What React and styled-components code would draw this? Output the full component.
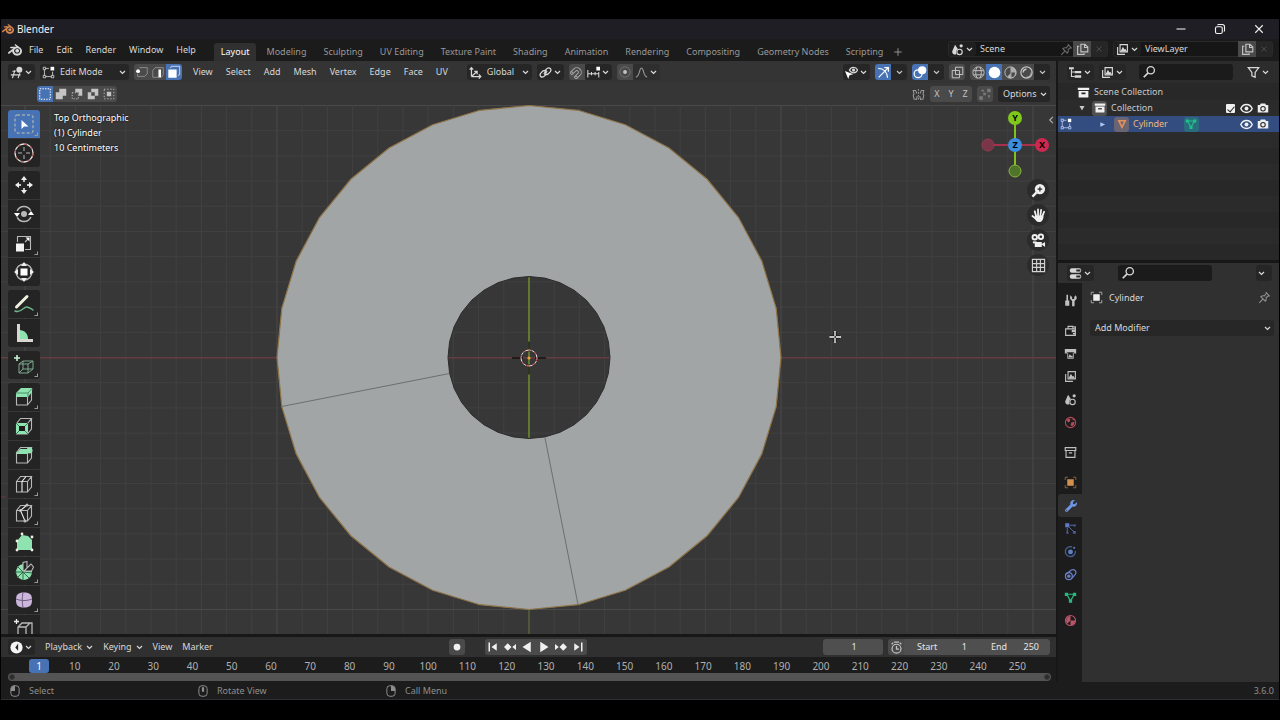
import React, { useState } from 'react';
import styled, { createGlobalStyle } from 'styled-components';
import { SiBlender } from 'react-icons/si';
import { FaWrench } from 'react-icons/fa';

const GlobalStyle = createGlobalStyle`
  * {
    box-sizing: border-box;
  }

  body {
    background: #000;
    color: #d8d8d8;
    font-family: 'Noto Sans', 'Open Sans', sans-serif;
    font-size: 9px;
    line-height: 14px;
    margin: 0;
  }

  button,
  input,
  select {
    background: none;
    border: 0;
    color: inherit;
    font: inherit;
    margin: 0;
    outline: none;
    padding: 0;
  }

  select {
    appearance: none;
  }
`;

const Screen = styled.div`
  display: flex;
  flex-direction: column;
  height: 100vh;
  min-height: 480px;
  padding: 19px 1px 20px;
`;

const TitleBar = styled.header`
  align-items: center;
  background: #201e25;
  color: #f2f2f2;
  display: flex;
  flex: none;
  gap: 3px;
  height: 20px;
  padding: 0 14px 0 1px;
`;

const AppTitle = styled.h1`
  flex: 1;
  font-size: 10px;
  font-weight: 400;
  margin: 0;
`;

const WindowButtons = styled.div`
  display: flex;
  gap: 27px;
`;

const MenuBar = styled.nav`
  align-items: flex-end;
  background: #1b1b1b;
  display: flex;
  flex: none;
  height: 22px;
  padding: 0 6px 0 7px;
`;

const Menus = styled.div`
  align-items: center;
  display: flex;
  gap: ${props => props.$gap || '13px'};
  height: 22px;
  padding: ${props => props.$padding || '0'};
`;

const PlainButton = styled.button`
  align-items: center;
  color: ${props => props.color || 'inherit'};
  display: flex;
  gap: 4px;
  justify-content: center;
  white-space: nowrap;
`;

const Tabs = styled.div`
  display: flex;
  flex: 1;
  gap: 3px;
  margin-left: 18px;
`;

const Tab = styled.button`
  background: ${props => (props.$active ? '#303030' : 'none')};
  border-radius: 3px 3px 0 0;
  color: ${props => (props.$active ? '#fff' : '#989898')};
  height: 18px;
  padding: 0 7px;
  white-space: nowrap;
`;

const IdBlock = styled.div`
  align-items: center;
  background: #161616;
  border: 1px solid #2a2a2a;
  border-radius: 3px;
  display: flex;
  height: 16px;
  margin: 0 0 4px 5px;
  width: 160px;
`;

const IdInput = styled.input`
  flex: 1;
  min-width: 0;
  padding-left: 4px;
`;

const Main = styled.main`
  background: #171717;
  display: flex;
  flex: 1;
  gap: 2px;
  min-height: 0;
`;

const LeftColumn = styled.div`
  display: flex;
  flex: 1;
  flex-direction: column;
  gap: 3px;
  min-width: 0;
`;

const RightColumn = styled.aside`
  display: flex;
  flex: none;
  flex-direction: column;
  gap: 3px;
  width: 221px;
`;

const Viewport = styled.section`
  background: #373737;
  display: flex;
  flex: 1;
  flex-direction: column;
  min-height: 0;
  overflow: hidden;
  position: relative;
`;

const Scene = styled.svg`
  height: 100%;
  left: 0;
  position: absolute;
  top: 0;
  width: 100%;
`;

const Header = styled.div`
  align-items: center;
  background: ${props => props.$bg || '#303030'};
  display: flex;
  flex: none;
  gap: 5px;
  height: ${props => props.$height || '22px'};
  padding: ${props => props.$padding || '0 7px'};
  position: relative;
`;

const Spacer = styled.div`
  flex: ${props => props.$grow || 1};
`;

const Group = styled.div`
  border-radius: 3px;
  display: flex;
  flex: none;
  margin-left: ${props => props.$left || '0'};
  overflow: hidden;
`;

const Toggle = styled.button`
  align-items: center;
  background: ${props =>
    props.$active ? '#4772b3' : props.$dark ? '#262626' : '#4a4a4a'};
  color: ${props => (props.$active ? '#fff' : '#c4c4c4')};
  display: flex;
  height: 16px;
  justify-content: center;
  width: ${props => props.$width || '16px'};
`;

const DropBox = styled.label`
  align-items: center;
  background: ${props => props.$bg || '#262626'};
  border-radius: 3px;
  display: flex;
  flex: none;
  gap: 2px;
  height: ${props => props.$height || '16px'};
  justify-content: space-between;
  padding: 0 3px 0 2px;
  width: ${props => props.$width || 'auto'};
`;

const Select = styled.select`
  flex: 1;
  min-width: 0;
  padding-left: 3px;
`;

const ViewBody = styled.div`
  display: flex;
  flex: 1;
  min-height: 0;
  padding: 5px 7px 0;
  position: relative;
`;

const Toolbar = styled.div`
  display: flex;
  flex: none;
  flex-direction: column;
  gap: 4px;
  width: 32px;
`;

const ToolGroup = styled.div`
  border-radius: 3px;
  display: flex;
  flex: none;
  flex-direction: column;
  gap: 1px;
  overflow: hidden;
`;

const Tool = styled.button`
  align-items: center;
  background: ${props => (props.$active ? '#4772b3' : '#242424')};
  display: flex;
  height: 28px;
  justify-content: center;
  position: relative;
  width: 32px;

  &::after {
    border: 1px solid #9a9a9a;
    border-left-color: transparent;
    border-top-color: transparent;
    bottom: 2px;
    content: '';
    display: ${props => (props.$more ? 'block' : 'none')};
    height: 2px;
    position: absolute;
    right: 2px;
    width: 2px;
  }
`;

const ViewInfo = styled.div`
  color: #fff;
  line-height: 15px;
  padding: 0 0 0 14px;
  text-shadow: 0 0 2px #000;
`;

const NavColumn = styled.div`
  align-items: flex-end;
  display: flex;
  flex-direction: column;
  gap: 3px;
`;

const AxisGizmo = styled.svg`
  margin-bottom: -2px;
`;

const NavButton = styled.button`
  align-items: center;
  background: #2b2b2b;
  border-radius: 50%;
  color: #f0f0f0;
  display: flex;
  height: 22px;
  justify-content: center;
  width: 22px;
`;

const PanelTab = styled.button`
  color: #b0b0b0;
  display: flex;
  position: absolute;
  right: 0;
  top: 10px;
`;

const Timeline = styled.section`
  background: #1c1c1c;
  flex: none;
`;

const NumberField = styled.label`
  align-items: center;
  background: #4f4f4f;
  border-radius: ${props => props.$radius || '3px'};
  color: #e6e6e6;
  display: flex;
  height: 16px;
  justify-content: space-between;
  padding: 0 11px 0 13px;
  width: ${props => props.$width};
`;

const NumberInput = styled.input`
  min-width: 0;
  text-align: ${props => props.$align || 'right'};
  width: ${props => props.$width || '24px'};
`;

const Ruler = styled.div`
  color: #b0b0b0;
  display: flex;
  font-size: 10px;
  height: 16px;
  line-height: 18px;
  padding: 0 19px 0 54px;
  position: relative;
  text-align: center;
`;

const Frame = styled.span`
  flex: 1;
`;

const Playhead = styled.span`
  background: #4772b3;
  border-radius: 3px;
  color: #fff;
  height: 14px;
  left: 28px;
  line-height: 14px;
  position: absolute;
  top: 2px;
  width: 20px;
`;

const ScrollBar = styled.div`
  align-items: center;
  background: #545454;
  border-radius: 4px;
  display: flex;
  height: 8px;
  justify-content: space-between;
  margin: 0 5px 1px 7px;
  padding: 0 1px;
`;

const Handle = styled.span`
  background: #2c2c2c;
  border: 1px solid #3c3c3c;
  border-radius: 50%;
  height: 6px;
  width: 6px;
`;

const Outliner = styled.section`
  background: #282828;
  display: flex;
  flex-direction: column;
  height: 199px;
`;

const SearchBox = styled.label`
  align-items: center;
  background: #1b1b1b;
  border-radius: 3px;
  display: flex;
  height: 16px;
  padding: 0 3px;
  width: 94px;
`;

const SearchInput = styled.input`
  flex: 1;
  min-width: 0;
`;

const Tree = styled.div`
  background: repeating-linear-gradient(#282828 0 16px, #2b2b2b 16px 32px);
  flex: 1;
  margin-top: 1px;
`;

const TreeRow = styled.div`
  align-items: center;
  background: ${props => (props.$selected ? '#334d80' : 'none')};
  color: ${props => (props.$selected ? '#f0b878' : '#c8c8c8')};
  display: flex;
  gap: 4px;
  height: 16px;
  padding: 0 10px 0 ${props => props.$indent};
`;

const IconTile = styled.span`
  align-items: center;
  background: ${props => props.$bg || 'none'};
  border-radius: 3px;
  display: flex;
  height: 15px;
  justify-content: center;
  margin-left: ${props => props.$left || '0'};
  width: 15px;
`;

const TreeCheck = styled.input`
  appearance: none;
  background: #f0f0f0;
  border-radius: 1px;
  height: 9px;
  margin-right: 1px;
  position: relative;
  width: 9px;

  &:checked::after {
    border: solid #222;
    border-width: 0 1px 1px 0;
    content: '';
    height: 6px;
    left: 3px;
    position: absolute;
    top: 1px;
    transform: rotate(40deg);
    width: 3px;
  }
`;

const Properties = styled.section`
  background: #303030;
  display: flex;
  flex: 1;
  flex-direction: column;
  min-height: 0;
`;

const PropBody = styled.div`
  display: flex;
  flex: 1;
  min-height: 0;
`;

const PropTabs = styled.div`
  background: #1c1c1c;
  display: flex;
  flex: none;
  flex-direction: column;
  gap: 7px;
  overflow: hidden;
  padding-top: 6px;
  width: 24px;
`;

const PropTabGroup = styled.div`
  display: flex;
  flex: none;
  flex-direction: column;
`;

const PropTab = styled.button`
  align-items: center;
  background: ${props => (props.$active ? '#303030' : 'none')};
  border-radius: 3px 0 0 3px;
  color: ${props => props.color || '#c0c0c0'};
  display: flex;
  height: 23px;
  justify-content: center;
  padding-left: 1px;
  width: 24px;
`;

const PropContent = styled.div`
  display: flex;
  flex: 1;
  flex-direction: column;
  gap: 15px;
  padding: 7px 5px 0 8px;
`;

const PropTitle = styled.div`
  align-items: center;
  display: flex;
  gap: 6px;
  height: 15px;
  padding-right: 3px;
`;

const StatusBar = styled.footer`
  align-items: center;
  background: #1c1c1c;
  border-bottom: 1px solid #2e2e34;
  color: #8e8e8e;
  display: flex;
  flex: none;
  height: 18px;
  padding: 0 5px 0 8px;
`;

const Hint = styled.span`
  align-items: center;
  display: flex;
  gap: 8px;
  width: 188px;
`;

const line = { fill: 'none', stroke: 'currentColor' };

const icons = {
  less: <path d="M11 3L6 8l5 5" {...line} strokeWidth="1.8" />,
  plus: <path d="M8 2v12M2 8h12" {...line} strokeWidth="1.5" />,
  close: <path d="M3 3l10 10M13 3L3 13" {...line} strokeWidth="1.5" />,
  minimize: <path d="M2 8h12" {...line} strokeWidth="1.4" />,
  restore: (
    <g {...line} strokeWidth="1.5">
      <rect x="2" y="5" width="9" height="9" rx="2" />
      <path d="M5 3c0-1 1-1 1-1h5c2 0 3 1 3 3v5c0 1-1 1-1 1" />
    </g>
  ),
  search: (
    <g {...line} strokeWidth="1.5">
      <circle cx="10" cy="6" r="4.2" />
      <path d="M7 9l-5 5" strokeWidth="2" />
    </g>
  ),
  pin: (
    <path
      d="M9.5 1.5l5 5M10.5 2.5L8 6C6 5.500 4.500 6 3.500 7l5.500 5.500c1-1 1.500-2.500 1-4.500l3.500-2.500M6 10l-4.500 4.500"
      {...line}
      strokeWidth="1.3"
    />
  ),
  copy: (
    <g {...line} strokeWidth="1.4">
      <path d="M6 1.500h5l3.500 3.500v6H6zM10.500 1.500v4h4" />
      <path d="M4 4H2v10h8v-1.500" />
    </g>
  ),
  scene: (
    <g>
      <path d="M5 2L1.5 10c-.5 4 4 5 5 3.500C5.500 11 7 8 8.500 7.500z" fill="currentColor" />
      <circle cx="10.500" cy="11" r="3.300" {...line} strokeWidth="1.4" />
      <circle cx="12.5" cy="3.5" r="2" fill="currentColor" />
    </g>
  ),
  layers: (
    <g>
      <path d="M5 2h9v9H5z" {...line} strokeWidth="1.4" />
      <path d="M2 5v9h9" {...line} strokeWidth="1.4" />
      <path d="M5.5 10.5l3-6 2 3.500 1-1 2 3.500z" fill="currentColor" />
    </g>
  ),
  viewEditor: (
    <g>
      <circle cx="11.5" cy="4.5" r="3.7" fill="currentColor" />
      <path d="M3 6.500h4M1 11h12M6 5l-3 10M12 9l-2 6" {...line} strokeWidth="1.4" />
    </g>
  ),
  editMode: (
    <g>
      <path d="M4.500 3h4M3 4.500v7M4.500 13h7M13 11.500V7" {...line} />
      <path d="M1.500 1.500h3v3h-3zM1.500 11.500h3v3h-3zM11.500 11.500h3v3h-3z" {...line} />
      <path d="M10.500 1h4.500v4.500h-4.500z" fill="#fff" />
    </g>
  ),
  vertexSel: (
    <g>
      <path d="M5 3h9v7l-3 3H3v-3" {...line} opacity=".6" />
      <circle cx="3.500" cy="7" r="2.200" fill="#fff" />
    </g>
  ),
  edgeSel: (
    <g>
      <path d="M2 6l3-3h9v8l-2 3H2z" {...line} opacity=".6" />
      <path d="M8.500 5h3v9h-3z" fill="#fff" />
    </g>
  ),
  faceSel: (
    <g>
      <path d="M4 3.500l1-2h9.500V11l-2 1" {...line} opacity=".8" />
      <path d="M1.500 5h9.500v9.500H1.500z" fill="#fff" />
    </g>
  ),
  axes: (
    <g {...line} strokeWidth="1.5">
      <path d="M3 13V2M.8 4.500L3 2l2.200 2.500M3 13h11M12 10.500l2.500 2.500-2.500 2.500M3 13l6.500-6M6.500 6.500h3.500V10" />
    </g>
  ),
  pivot: (
    <g {...line} strokeWidth="1.5">
      <path d="M7 6l3-3c3-2 6 1 4 4l-3 3c-2 1-4 1-5-1" />
      <path d="M9 10l-3 3c-3 2-6-1-4-4l3-3c2-1 4-1 5 1" />
      <circle cx="8" cy="8" r="1" fill="currentColor" />
    </g>
  ),
  magnet: (
    <g transform="rotate(45 8 8)" opacity=".75">
      <path
        d="M2.500 14V7.500a5.500 5.500 0 0 1 11 0V14h-3.500V7.500a2 2 0 0 0-4 0V14zM2.500 11.500H6M10 11.500h3.500"
        {...line}
        strokeWidth="1.200"
      />
    </g>
  ),
  increment: (
    <g>
      <path d="M1 5v9M5.500 7.500v4M10 7.500v4M14.500 7.500V14M1 9.500h13" {...line} strokeWidth="1.3" />
      <path d="M11.500 1H16v4.500h-4.500z" fill="#fff" />
    </g>
  ),
  proportional: (
    <g>
      <circle cx="8" cy="8" r="6" {...line} opacity=".35" />
      <circle cx="8" cy="8" r="2.200" fill="currentColor" />
    </g>
  ),
  falloff: <path d="M1 13.500c5 0 4-11 7-11s2 11 7 11" {...line} strokeWidth="1.400" opacity=".6" />,
  visibility: (
    <g>
      <path d="M5.500 5c2-4.500 8-4.500 10 0-2 4.500-8 4.500-10 0z" {...line} strokeWidth="1.500" />
      <circle cx="10.500" cy="5" r="2" fill="currentColor" />
      <path d="M0 6l10 4-4.500 1.500L4 16z" fill="#fff" />
    </g>
  ),
  gizmo: (
    <g {...line} strokeWidth="1.500">
      <path d="M1.500 3c7 0 11 5 11.500 11.500M2 14L14 2M9 2h5v5" />
    </g>
  ),
  overlay: (
    <g>
      <circle cx="5.800" cy="10" r="4.500" {...line} strokeWidth="1.400" />
      <circle cx="10.500" cy="6" r="4.700" fill="currentColor" />
    </g>
  ),
  xray: (
    <g {...line} strokeWidth="1.200">
      <path d="M5.500 1.500h9v9h-9zM1.500 5.500h9v9h-9z" />
    </g>
  ),
  wire: (
    <g {...line}>
      <circle cx="8" cy="8" r="6" />
      <path d="M2.500 6h11M2.500 10.500h11M6.500 2c-2 4-2 8 0 12M9.500 2c2 4 2 8 0 12" />
    </g>
  ),
  solid: <circle cx="8" cy="8" r="6.200" fill="currentColor" />,
  material: (
    <g>
      <circle cx="8" cy="8" r="6" {...line} />
      <path d="M8 2a6 6 0 0 1 0 12 6 6 0 0 1-3-1c0-2 2-3 3-4z" fill="currentColor" opacity=".8" />
      <path d="M9 8h4l-1 4-3 1z" fill="#4a4a4a" />
    </g>
  ),
  rendered: (
    <g {...line}>
      <circle cx="8" cy="8" r="6" strokeWidth="1.300" />
      <path d="M4.500 8A3.500 3.500 0 0 1 8 4.500" strokeWidth="1.500" />
      <path d="M13 8a5 5 0 0 1-5 5" strokeWidth="1.500" opacity=".6" />
    </g>
  ),
  butterfly: (
    <g {...line} strokeWidth="1.300">
      <path d="M6 7L4.500 3H1.500l1 4.500L1.500 9l1 4.500 3 .5L6.500 10M10 7l1.500-4h3l-1 4.500 1 1.500-1 4.500-3 .5L9.500 10" />
      <path d="M8 1.500v13" strokeDasharray="2 1.500" />
    </g>
  ),
  snapUv: (
    <g fill="currentColor" opacity=".4">
      <path d="M10.500 2h4v4h-4zM6 6.500h3v3H6zM1.500 10.500h4v4h-4zM4 3h3v2H4zM11.500 9h2v3h-2z" />
    </g>
  ),
  selNew: <path d="M2 2h12v12H2z" {...line} strokeWidth="1.200" strokeDasharray="1.600 1.400" />,
  selAdd: <path d="M6 2h8v8h-4v4H2V6h4z" fill="currentColor" />,
  selSub: (
    <g>
      <path d="M6 2h8v8h-4V6H6z" fill="currentColor" />
      <path d="M2.500 6.500h7v7h-7z" {...line} strokeDasharray="1.500 1.500" />
    </g>
  ),
  selXor: <path d="M6 2h8v8h-4v4H2V6h4zM6 6v4h4V6z" fill="currentColor" fillRule="evenodd" />,
  selAnd: (
    <g>
      <path d="M2.500 2.500h11v11h-11z" {...line} strokeDasharray="1.500 2" />
      <path d="M5.500 5.500h5v5h-5z" fill="currentColor" />
    </g>
  ),
  tree: (
    <g>
      <path d="M0 1.500h6V4H0zM7 6h8v3H7zM7 11.500h8v3H7z" fill="currentColor" />
      <path d="M3 4v9h4M3 7.500h4" {...line} strokeWidth="1.300" />
    </g>
  ),
  filter: <path d="M1.500 2h13L10 8v6l-4-2V8z" {...line} strokeWidth="1.500" />,
  box: <path d="M1 2h14v3H1zM2 6h12v8H2zM5.500 8v2h5V8z" fill="currentColor" fillRule="evenodd" />,
  boxLine: (
    <g {...line} strokeWidth="1.400">
      <path d="M1.500 2h13v3.500h-13zM2.500 5.500V14h11V5.500M6 8.500h4" />
    </g>
  ),
  down: <path d="M3 4h10l-5 9z" fill="currentColor" />,
  right: <path d="M3 3v10l11-5z" fill="currentColor" />,
  mesh: <path d="M2 2.500h12L8 14.500zM5.500 4.500L8 10l2.500-5.500z" fill="currentColor" fillRule="evenodd" />,
  meshData: (
    <g>
      <path d="M3.500 4h9L8 12.500z" {...line} strokeWidth="1.500" />
      <path d="M1 2h4v4H1zM11 2h4v4h-4zM6 10.500h4v4H6z" fill="currentColor" />
    </g>
  ),
  eye: (
    <g>
      <path d="M1 8c3-6.500 11-6.500 14 0-3 6.500-11 6.500-14 0z" {...line} strokeWidth="1.800" />
      <circle cx="8" cy="8" r="2.400" fill="currentColor" />
    </g>
  ),
  camera: (
    <g>
      <path d="M1 4h3l1-2h6l1 2h3v10H1z" fill="currentColor" />
      <circle cx="8" cy="9" r="3" fill="none" stroke="#282828" strokeWidth="1.400" />
    </g>
  ),
  propsEditor: (
    <g>
      <rect x="1" y="1.500" width="14" height="5.500" rx="2.500" fill="currentColor" />
      <rect x="1" y="9" width="14" height="5.500" rx="2.500" fill="currentColor" />
      <path d="M9 3h5v2.500H9zM9 10.500h5V13H9z" fill="#282828" />
    </g>
  ),
  object: (
    <g>
      <path d="M1.500 5V1.500H5M11 1.500h3.500V5M14.500 11v3.500H11M5 14.500H1.500V11" {...line} opacity=".7" />
      <path d="M4 4h8v8H4z" fill="currentColor" />
    </g>
  ),
  tools: (
    <path
      d="M3 1h2v7h1.500v6.500h-5V8H3zM8 1.500L10 4v2h2.500V4L14 1.500l1.500 2V6l-2.500 2.500v6.500h-3V8.500L7.500 6V3.500z"
      fill="currentColor"
    />
  ),
  render: (
    <g>
      <path d="M2 6h12v8H2zM5 6V3h6v3M12 3.500h2V6" {...line} strokeWidth="1.400" />
      <path d="M9.500 7h4v3h-4zM11 11h3v2h-3z" fill="currentColor" />
    </g>
  ),
  output: (
    <g>
      <path d="M1 2.500h14V8h-2.500V6.500h-9V8H1z" fill="currentColor" />
      <path d="M4.500 7v7h7V7" {...line} />
      <path d="M5 13l2-4 2 2 1-1 1 3z" fill="currentColor" />
    </g>
  ),
  world: (
    <g>
      <circle cx="8" cy="8" r="6.300" {...line} strokeWidth="1.300" />
      <path d="M3 5l3-2 2 1-1 3-2 1zM9 8l4-1-1 4-2 1.500L8 11zM10 2.500l3 2-2 1z" fill="currentColor" />
    </g>
  ),
  particles: (
    <g>
      <path d="M1.500 1.500h5v5h-5z" fill="currentColor" />
      <path d="M7 4h6M4 7v6M6 6l6 6" {...line} />
      <path d="M12 3h2.500v2.500H12zM11 11h3.500v3.500H11zM3 12h2.500v2.500H3z" fill="currentColor" opacity=".7" />
    </g>
  ),
  physics: (
    <g>
      <path d="M10 2.300a6.200 6.200 0 1 0 4 5" {...line} strokeWidth="1.500" opacity=".7" />
      <circle cx="8" cy="8.500" r="3" fill="currentColor" />
      <circle cx="12.500" cy="3.500" r="1.300" fill="currentColor" />
    </g>
  ),
  constraint: (
    <g {...line} strokeWidth="1.500">
      <circle cx="6" cy="10" r="4.200" />
      <path d="M2 8l7-5.500c4-2 7 2 5 5l-4 5" />
      <circle cx="6" cy="10" r="1.400" fill="currentColor" />
    </g>
  ),
  matSphere: (
    <g>
      <circle cx="8" cy="8" r="6.200" {...line} strokeWidth="1.400" />
      <path d="M8 2a6 6 0 0 0-4 10l4-4zM8 8h6a6 6 0 0 1-6 6z" fill="currentColor" />
    </g>
  ),
  clock: (
    <g>
      <circle cx="8" cy="8" r="7.500" fill="#f4f4f4" />
      <path d="M10 3L6.500 8 10 12z" fill="#262626" />
    </g>
  ),
  dot: <circle cx="8" cy="8" r="4.500" fill="currentColor" />,
  jumpStart: <path d="M2 2h2v12H2zM13 3v10L6 8z" fill="currentColor" />,
  prevKey: <path d="M0 8l5-5 5 5-5 5zM16 4v8l-5-4z" fill="currentColor" />,
  playBack: <path d="M13 1v14L2 8z" fill="currentColor" />,
  play: <path d="M3 1v14l11-7z" fill="currentColor" />,
  nextKey: <path d="M6 8l5-5 5 5-5 5zM0 4v8l5-4z" fill="currentColor" />,
  jumpEnd: <path d="M12 2h2v12h-2zM3 3v10l7-5z" fill="currentColor" />,
  stopwatch: (
    <g {...line} strokeWidth="1.500">
      <circle cx="8" cy="9.500" r="5.500" />
      <path d="M8 6v4h3M5 1.500h6M2 4l2-2M14 4l-2-2" />
    </g>
  ),
  mouseLeft: (
    <g>
      <rect x="2.500" y="1" width="11" height="14" rx="4" {...line} strokeWidth="1.300" />
      <path d="M2.500 8V4L6 1h2v7z" fill="currentColor" />
    </g>
  ),
  mouseMiddle: (
    <g>
      <rect x="2.500" y="1" width="11" height="14" rx="4" {...line} strokeWidth="1.300" />
      <path d="M6.500 3h3v6h-3z" fill="currentColor" />
    </g>
  ),
  mouseRight: (
    <g>
      <rect x="2.500" y="1" width="11" height="14" rx="4" {...line} strokeWidth="1.300" />
      <path d="M13.500 8V4L10 1H8v7z" fill="currentColor" />
    </g>
  ),
  zoom: (
    <g>
      <path d="M6 10l-4.500 4.500" {...line} strokeWidth="2.500" />
      <circle cx="9.500" cy="6.500" r="5.500" fill="currentColor" />
      <path d="M9.500 4v5M7 6.500h5" stroke="#2b2b2b" strokeWidth="1.300" />
    </g>
  ),
  hand: (
    <g>
      <path
        d="M5.500 9L4 3.500M7.500 8V1.500M10 8l.8-6M12 9l2-5M6 12L1.500 8.500"
        {...line}
        strokeWidth="1.900"
        strokeLinecap="round"
      />
      <path d="M4.500 8h8.500c1 3-1 7-4 7-3.500 0-4-2-5.500-4.500z" fill="currentColor" />
    </g>
  ),
  movie: (
    <g>
      <path d="M4 9.500h7.500V15H4zM11 12l4-2.500V15z" fill="currentColor" />
      <circle cx="4" cy="4.500" r="2.400" {...line} strokeWidth="2" />
      <circle cx="10.500" cy="4" r="2.400" {...line} strokeWidth="2" />
      <path d="M2 9h4v2H2z" fill="currentColor" />
    </g>
  ),
  gridView: (
    <path d="M1.500 1.500h13v13h-13zM6 1.500v13M10 1.500v13M1.500 6h13M1.500 10h13" {...line} strokeWidth="1.200" opacity=".85" />
  )
};

/* tool icons are drawn on a 20x20 board */
const green = '#8fe3b0';
const grey = '#b8b8b8';
const toolLine = { fill: 'none', stroke: grey, strokeWidth: 1.1 };
const cube = 'M2.500 7.500h11v10.500h-11zM2.500 7.500l4-5h11l-4 5M17.500 2.500V13l-4 5';

const toolIcons = {
  select: (
    <g>
      <rect x="1" y="1" width="18" height="18" rx="2" fill="none" stroke="#c9c3b0" strokeDasharray="3 2" />
      <path d="M7.500 6v9l2.500-2.500h4.500z" fill="#fff" />
    </g>
  ),
  cursor: (
    <g fill="none">
      <circle cx="10" cy="10" r="9" stroke="#e8e8e8" strokeWidth="1.300" />
      <circle cx="10" cy="10" r="9" stroke="#a86058" strokeWidth="1.300" strokeDasharray="3.500 3.500" />
      <path d="M10 4v4M10 12v4M4 10h4M12 10h4" stroke={grey} />
    </g>
  ),
  move: (
    <g>
      <path d="M10 4v3M10 13v3M4 10h3M13 10h3" stroke="#fff" strokeWidth="1.400" />
      <path d="M10 1l3 4H7zM10 19l3-4H7zM1 10l4-3v6zM19 10l-4-3v6z" fill="#f0f0f0" />
    </g>
  ),
  rotate: (
    <g>
      <circle cx="10" cy="10" r="7.500" {...toolLine} strokeWidth="1.500" strokeDasharray="17 6.500" strokeDashoffset="-3" />
      <path d="M0 9h6l-3 4zM14 11h6l-3-4z" fill="#fff" />
      <circle cx="10" cy="10" r="3" fill={grey} />
    </g>
  ),
  scale: (
    <g>
      <path d="M3.500 9V3.500h13v13H11M11 9l4-4" {...toolLine} />
      <path d="M11.500 4.500H15.500v4z" fill="#fff" />
      <path d="M2 10.500h8v8H2z" fill="#f4f4f4" />
    </g>
  ),
  transform: (
    <g>
      <circle cx="10" cy="10" r="8" {...toolLine} strokeWidth="1.400" />
      <path d="M10 0l3 4H7zM10 20l3-4H7zM0 10l4-3v6zM20 10l-4-3v6z" fill="#f0f0f0" />
      <path d="M6.500 6.500h7v7h-7z" fill="#fff" />
    </g>
  ),
  annotate: (
    <g fill="none" strokeLinecap="round">
      <path d="M1 17c6 3 9-5 12-4s4 1 6 3" stroke="#6fb58b" strokeWidth="1.400" />
      <path d="M2.500 13L13 2.500" stroke="#f0f0e0" strokeWidth="3" />
    </g>
  ),
  measure: (
    <g>
      <path d="M5 16V7c6 0 9 4 9 9z" fill={green} />
      <path d="M3 1h3v15h13v3H3z" fill="#d8d8d0" />
    </g>
  ),
  addCube: (
    <g>
      <path d="M5 9h9v9H5zM5 9l4-3h10l-5 3M19 6v8l-5 4M9 6v8h10M9 14l-4 4" fill="none" stroke="#7ba98c" />
      <path d="M3 0v6M0 3h6" stroke="#c5f0d5" strokeWidth="1.600" />
    </g>
  ),
  extrude: (
    <g>
      <path d={cube} {...toolLine} />
      <path d="M2 10V6l5-5h11v4l-4 5z" fill={green} />
      <path d="M2 6h12l4-4.500M14 6v4" fill="none" stroke="#4d8f69" />
    </g>
  ),
  inset: (
    <g>
      <path d={cube} {...toolLine} />
      <path d="M2 7h12v11H2z" fill={green} />
      <path d="M5 10h6v5H5z" fill="#1c1c1c" />
      <path d="M2 7l3 3M14 7l-3 3M2 18l3-3M14 18l-3-3" stroke="#3d7a56" />
    </g>
  ),
  bevel: (
    <g>
      <path d={cube} {...toolLine} />
      <path d="M2 9l4-5h9l-2 5z" fill={green} />
      <circle cx="15.500" cy="5.500" r="3" fill={green} />
    </g>
  ),
  loopCut: (
    <g {...toolLine}>
      <path d={cube} />
      <path d="M8 18V7.500l4-5" stroke="#eee" />
    </g>
  ),
  knife: (
    <g {...toolLine}>
      <path d={cube} />
      <path d="M13 2L6.500 7.500 11 18" stroke="#eee" />
      <circle cx="6.500" cy="7.500" r="1" fill="#fff" />
      <circle cx="13" cy="2" r="1" fill="#fff" />
      <circle cx="11" cy="18" r="1" fill="#fff" />
    </g>
  ),
  poly: (
    <g>
      <path d="M3 18V9l5-6 6 1 4 4v10z" fill={green} />
      <g fill="#f0f0e0">
        <circle cx="3" cy="18" r="1.400" />
        <circle cx="18" cy="18" r="1.400" />
        <circle cx="3" cy="9" r="1.400" />
        <circle cx="8" cy="2" r="1.400" />
        <circle cx="18" cy="5" r="1.400" />
      </g>
    </g>
  ),
  spin: (
    <g>
      <path d="M9 10V3A8 8 0 1 0 18 10z" fill={green} />
      <path d="M9 11v8M9 11H1M9 11l6 6M9 11l-6 6M9 11L3 5M9 11l9 1" stroke="#2f6b48" />
      <path d="M9 10V1.500l4-1V8M10 10l7-7 2.500 3-2 4z" {...toolLine} />
    </g>
  ),
  smooth: (
    <g>
      <path d="M10 2.500c6 0 8 2 8 7.500s-2 7.500-8 7.500S2 15.500 2 10s2-7.500 8-7.500z" fill="#cdb6dc" />
      <path d="M2 9c5 2 11 2 16 0M9 2.500c-1 5-1 10 0 15" fill="none" stroke="#6f5c80" />
    </g>
  ),
  edgeSlide: (
    <g>
      <path d="M4 20V8l4-4h10v12M12 20V8l4-4M4 8h8M18 16v4" {...toolLine} strokeWidth="1.300" />
      <path d="M2.500 0v5M0 2.500h5" stroke="#eee" strokeWidth="1.300" />
    </g>
  )
};

function Icon({ name, size = 12, color }) {
  return (
    <svg width={size} height={size} viewBox="0 0 16 16" color={color} aria-hidden="true">
      {icons[name]}
    </svg>
  );
}

function Chevron() {
  return (
    <svg width="7" height="5" viewBox="0 0 7 5" aria-hidden="true">
      <path d="M1 1l2.500 2.500L6 1" {...line} strokeWidth="1.200" />
    </svg>
  );
}

function Drop({ icon, value, label, ...rest }) {
  return (
    <DropBox {...rest}>
      {icon && <Icon name={icon} size={13} />}
      {value && (
        <Select aria-label={label} defaultValue={value}>
          <option>{value}</option>
        </Select>
      )}
      <Chevron />
    </DropBox>
  );
}

const center = { x: 529, y: 358 };

function ring(radius) {
  return Array.from({ length: 32 }, (_, i) => {
    const angle = (i * Math.PI) / 16;
    const x = center.x + radius * Math.sin(angle);
    const y = center.y - radius * Math.cos(angle);
    return `${x.toFixed(1)},${y.toFixed(1)}`;
  }).join(' ');
}

const outer = ring(252);
const inner = ring(81);

function MeshScene() {
  const steps = Array.from({ length: 43 }, (_, i) => i - 21);
  return (
    <Scene viewBox="1 61 1055 574" preserveAspectRatio="xMidYMid slice">
      {steps.map(i => (
        <path
          key={i}
          d={`M${center.x + i * 25.2} 61v580M1 ${center.y + i * 25.2}h1056`}
          fill="none"
          stroke={i % 10 === 0 ? '#4a4a4a' : '#404040'}
        />
      ))}
      <path d="M1 358.500h1056" stroke="#73363f" />
      <path d="M1 497.500h5" stroke="#73363f" />
      <path d="M529 61v580" stroke="#5c7030" />
      <path
        d={`M${outer.replace(/ /g, 'L')}ZM${inner.replace(/ /g, 'L')}Z`}
        fill="#a1a5a5"
        fillRule="evenodd"
      />
      <polygon points={outer} fill="none" stroke="#8f7448" strokeWidth="1.200" />
      <polygon points={inner} fill="none" stroke="#2c2c2c" />
      <path d="M281.800 407L449.500 374M545 438.500L578 605" stroke="#6c6f6f" />
      <path d="M529 278v160" stroke="#6c8a2c" strokeWidth="1.300" />
      <path d="M512 358.500h11M535 358.500h11M529 342v10M529 365v10" stroke="#111" strokeWidth="1.300" />
      <circle cx="529" cy="358.500" r="8" fill="none" stroke="#e8dcdc" />
      <circle cx="529" cy="358.500" r="8" fill="none" stroke="#a83030" strokeDasharray="3.100 3.100" />
      <circle cx="529" cy="358.500" r="1.600" fill="#f0a030" />
      <path d="M830 337.500h4M836 337.500h4M835 332.500v4M835 338.500v4" stroke="#111" strokeWidth="3" />
      <path d="M829.500 337.500h5M836 337.500h5M835 331.500v5M835 338.500v5" stroke="#fff" strokeWidth="1.300" />
    </Scene>
  );
}

function Gizmo() {
  return (
    <AxisGizmo width="70" height="68" viewBox="979 110 70 68" fontSize="9" fontWeight="700" textAnchor="middle">
      <path d="M1015 145v-27M1015 145v26" stroke="#83c21d" strokeWidth="2" />
      <path d="M988 145h54" stroke="#a8304c" strokeWidth="2" />
      <circle cx="1015" cy="118" r="7" fill="#7fc81c" />
      <circle cx="1015" cy="171" r="6" fill="#50752a" stroke="#86b43c" />
      <circle cx="988" cy="145" r="6" fill="#7b3548" stroke="#943a51" />
      <circle cx="1042" cy="145" r="7" fill="#cc2850" />
      <circle cx="1015" cy="145" r="7" fill="#3a8ee0" />
      <text x="1015" y="121">Y</text>
      <text x="1015" y="148">Z</text>
      <text x="1042" y="148">X</text>
    </AxisGizmo>
  );
}

const workspaces = [
  'Layout',
  'Modeling',
  'Sculpting',
  'UV Editing',
  'Texture Paint',
  'Shading',
  'Animation',
  'Rendering',
  'Compositing',
  'Geometry Nodes',
  'Scripting'
];

const toolGroups = [
  ['select', 'cursor'],
  ['move', 'rotate', 'scale', 'transform'],
  ['annotate', 'measure'],
  ['addCube'],
  ['extrude', 'inset', 'bevel', 'loopCut', 'knife', 'poly', 'spin', 'smooth', 'edgeSlide']
];

const withMore = ['select', 'scale', 'annotate', 'addCube', 'extrude', 'loopCut', 'knife', 'spin', 'smooth'];

const propGroups = [
  [['tools']],
  [['render'], ['output'], ['layers'], ['scene'], ['world', '#b04c58']],
  [['boxLine']],
  [
    ['object', '#d09050'],
    ['wrench', '#6f96e8'],
    ['particles', '#6078c8'],
    ['physics', '#5c80c8'],
    ['constraint', '#6a80cc'],
    ['meshData', '#28b880'],
    ['matSphere', '#b85468']
  ]
];

const transport = ['jumpStart', 'prevKey', 'playBack', 'play', 'nextKey', 'jumpEnd'];

export default function App() {
  const [workspace, setWorkspace] = useState('Layout');
  const [tool, setTool] = useState('select');
  const frames = Array.from({ length: 25 }, (_, i) => (i + 1) * 10);

  return (
    <Screen>
      <GlobalStyle />
      <TitleBar>
        <SiBlender size={12} color="#d88850" />
        <AppTitle>Blender</AppTitle>
        <WindowButtons>
          {['minimize', 'restore', 'close'].map(name => (
            <PlainButton key={name} aria-label={name}>
              <Icon name={name} />
            </PlainButton>
          ))}
        </WindowButtons>
      </TitleBar>

      <MenuBar>
        <Menus>
          <PlainButton aria-label="Blender menu">
            <SiBlender size={14} />
          </PlainButton>
        </Menus>
        <Menus $padding="0 0 0 7px">
          {['File', 'Edit', 'Render', 'Window', 'Help'].map(name => (
            <PlainButton key={name}>{name}</PlainButton>
          ))}
        </Menus>
        <Tabs>
          {workspaces.map(name => (
            <Tab key={name} $active={name === workspace} onClick={() => setWorkspace(name)}>
              {name}
            </Tab>
          ))}
          <PlainButton color="#989898" aria-label="Add workspace">
            <Icon name="plus" size={10} />
          </PlainButton>
        </Tabs>
        <IdBlock>
          <Drop icon="scene" $bg="#1f1f1f" $height="14px" />
          <IdInput aria-label="Scene" defaultValue="Scene" />
          <Icon name="pin" size={13} color="#6a6a6a" />
          <Toggle aria-label="New scene" $width="18px">
            <Icon name="copy" size={13} />
          </Toggle>
          <Toggle aria-label="Delete scene" $dark>
            <Icon name="close" size={8} color="#555" />
          </Toggle>
        </IdBlock>
        <IdBlock>
          <Drop icon="layers" $bg="#1f1f1f" $height="14px" />
          <IdInput aria-label="View layer" defaultValue="ViewLayer" />
          <Toggle aria-label="New view layer" $width="18px">
            <Icon name="copy" size={13} />
          </Toggle>
          <Toggle aria-label="Delete view layer" $dark>
            <Icon name="close" size={8} color="#555" />
          </Toggle>
        </IdBlock>
      </MenuBar>

      <Main>
        <LeftColumn>
          <Viewport>
            <MeshScene />
            <Header $bg="#343434" $padding="0 6px 0 7px">
              <Drop icon="viewEditor" />
              <Drop icon="editMode" value="Edit Mode" label="Mode" $width="89px" />
              <Group>
                <Toggle aria-label="Vertex select">
                  <Icon name="vertexSel" size={14} />
                </Toggle>
                <Toggle aria-label="Edge select">
                  <Icon name="edgeSel" size={14} />
                </Toggle>
                <Toggle $active aria-label="Face select">
                  <Icon name="faceSel" size={14} />
                </Toggle>
              </Group>
              <Menus $padding="0 14px 0 6px">
                {['View', 'Select', 'Add', 'Mesh', 'Vertex', 'Edge', 'Face', 'UV'].map(name => (
                  <PlainButton key={name}>{name}</PlainButton>
                ))}
              </Menus>
              <Drop icon="axes" value="Global" label="Orientation" $width="65px" />
              <Drop icon="pivot" />
              <Group>
                <Toggle aria-label="Snap">
                  <Icon name="magnet" size={13} />
                </Toggle>
                <Drop icon="increment" />
              </Group>
              <Group>
                <Toggle aria-label="Proportional editing">
                  <Icon name="proportional" size={14} />
                </Toggle>
                <Drop icon="falloff" $bg="#2e2e2e" />
              </Group>
              <Spacer />
              <Drop icon="visibility" />
              <Group>
                <Toggle $active aria-label="Gizmos">
                  <Icon name="gizmo" size={13} />
                </Toggle>
                <Toggle $dark aria-label="Gizmo options">
                  <Chevron />
                </Toggle>
              </Group>
              <Group>
                <Toggle $active aria-label="Overlays">
                  <Icon name="overlay" size={14} />
                </Toggle>
                <Toggle $dark aria-label="Overlay options">
                  <Chevron />
                </Toggle>
              </Group>
              <Group>
                <Toggle aria-label="X-ray">
                  <Icon name="xray" size={13} />
                </Toggle>
              </Group>
              <Group>
                {['wire', 'solid', 'material', 'rendered'].map(name => (
                  <Toggle key={name} $active={name === 'solid'} aria-label={name}>
                    <Icon name={name} size={15} />
                  </Toggle>
                ))}
                <Toggle $dark aria-label="Shading options">
                  <Chevron />
                </Toggle>
              </Group>
            </Header>
            <Header $bg="#363636" $padding="0 6px 0 36px">
              <Group>
                {['selNew', 'selAdd', 'selSub', 'selXor', 'selAnd'].map(name => (
                  <Toggle key={name} $active={name === 'selNew'} aria-label={name}>
                    <Icon name={name} size={14} />
                  </Toggle>
                ))}
              </Group>
              <Spacer />
              <Icon name="butterfly" size={13} color="#9a9a9a" />
              <Group>
                {['X', 'Y', 'Z'].map(name => (
                  <Toggle key={name} $width="14px">
                    {name}
                  </Toggle>
                ))}
              </Group>
              <Group>
                <Toggle aria-label="Snap UV">
                  <Icon name="snapUv" size={14} />
                </Toggle>
              </Group>
              <Drop value="Options" label="Options" $width="52px" />
            </Header>
            <ViewBody>
              <Toolbar>
                {toolGroups.map(group => (
                  <ToolGroup key={group[0]}>
                    {group.map(name => (
                      <Tool
                        key={name}
                        $active={name === tool}
                        $more={withMore.includes(name)}
                        aria-label={name}
                        onClick={() => setTool(name)}
                      >
                        <svg width="20" height="20" viewBox="0 0 20 20">
                          {toolIcons[name]}
                        </svg>
                      </Tool>
                    ))}
                  </ToolGroup>
                ))}
              </Toolbar>
              <ViewInfo>
                <div>Top Orthographic</div>
                <div>(1) Cylinder</div>
                <div>10 Centimeters</div>
              </ViewInfo>
              <Spacer />
              <NavColumn>
                <Gizmo />
                {['zoom', 'hand', 'movie', 'gridView'].map(name => (
                  <NavButton key={name} aria-label={name}>
                    <Icon name={name} size={15} />
                  </NavButton>
                ))}
              </NavColumn>
              <PanelTab aria-label="Open sidebar">
                <Icon name="less" size={10} />
              </PanelTab>
            </ViewBody>
          </Viewport>

          <Timeline>
            <Header $height="20px" $padding="0 6px 0 7px">
              <Drop icon="clock" />
              <Menus $gap="10px" $padding="0 0 0 5px">
                {['Playback', 'Keying'].map(name => (
                  <PlainButton key={name}>
                    {name}
                    <Chevron />
                  </PlainButton>
                ))}
                <PlainButton>View</PlainButton>
                <PlainButton>Marker</PlainButton>
              </Menus>
              <Spacer />
              <Group>
                <Toggle aria-label="Auto keying">
                  <Icon name="dot" color="#f0f0f0" />
                </Toggle>
              </Group>
              <Group $left="15px">
                {transport.map(name => (
                  <Toggle key={name} $width="17px" aria-label={name}>
                    <Icon name={name} color="#f0f0f0" />
                  </Toggle>
                ))}
              </Group>
              <Spacer />
              <NumberField $width="60px">
                <NumberInput aria-label="Current frame" defaultValue="1" $align="center" $width="100%" />
              </NumberField>
              <Group>
                <Toggle aria-label="Use preview range">
                  <Icon name="stopwatch" size={13} />
                </Toggle>
                <NumberField $width="74px" $radius="0">
                  Start
                  <NumberInput defaultValue="1" />
                </NumberField>
                <NumberField $width="72px" $radius="0 3px 3px 0">
                  End
                  <NumberInput defaultValue="250" />
                </NumberField>
              </Group>
            </Header>
            <Ruler>
              <Playhead>1</Playhead>
              {frames.map(frame => (
                <Frame key={frame}>{frame}</Frame>
              ))}
            </Ruler>
            <ScrollBar>
              <Handle />
              <Handle />
            </ScrollBar>
          </Timeline>
        </LeftColumn>

        <RightColumn>
          <Outliner>
            <Header $bg="#2c2c2c" $padding="0 7px 0 9px">
              <Drop icon="tree" />
              <Drop icon="layers" />
              <Spacer />
              <SearchBox>
                <Icon name="search" size={14} />
                <SearchInput aria-label="Filter outliner" />
              </SearchBox>
              <Spacer />
              <Drop icon="filter" $bg="#2c2c2c" />
            </Header>
            <Tree>
              <TreeRow $indent="19px">
                <Icon name="box" size={13} color="#f0f0f0" />
                <span>Scene Collection</span>
              </TreeRow>
              <TreeRow $indent="20px">
                <Icon name="down" size={8} />
                <IconTile $bg="#505050" $left="2px">
                  <Icon name="box" color="#f0f0f0" />
                </IconTile>
                <span>Collection</span>
                <Spacer />
                <TreeCheck type="checkbox" defaultChecked aria-label="Enable collection" />
                <Icon name="eye" color="#eee" size={13} />
                <Icon name="camera" color="#eee" />
              </TreeRow>
              <TreeRow $selected $indent="2px">
                <Icon name="editMode" color="#c8d8ff" />
                <IconTile />
                <IconTile>
                  <Icon name="right" size={7} color="#a8c8f0" />
                </IconTile>
                <IconTile $bg="#6b6472">
                  <Icon name="mesh" color="#e0935e" />
                </IconTile>
                <span>Cylinder</span>
                <IconTile $bg="#2b6c7c" $left="12px">
                  <Icon name="meshData" color="#1fc08c" />
                </IconTile>
                <Spacer />
                <Icon name="eye" color="#eee" size={13} />
                <Icon name="camera" color="#eee" />
              </TreeRow>
            </Tree>
          </Outliner>

          <Properties>
            <Header $height="20px" $padding="0 7px 0 9px">
              <Drop icon="propsEditor" />
              <Spacer $grow={3} />
              <SearchBox>
                <Icon name="search" size={14} />
                <SearchInput aria-label="Search properties" />
              </SearchBox>
              <Spacer $grow={7} />
              <Drop $width="16px" />
            </Header>
            <PropBody>
              <PropTabs>
                {propGroups.map(group => (
                  <PropTabGroup key={group[0][0]}>
                    {group.map(([name, color]) => (
                      <PropTab key={name} color={color} $active={name === 'wrench'} aria-label={name}>
                        {name === 'wrench' ? <FaWrench size={12} /> : <Icon name={name} size={13} />}
                      </PropTab>
                    ))}
                  </PropTabGroup>
                ))}
              </PropTabs>
              <PropContent>
                <PropTitle>
                  <Icon name="object" size={13} color="#f0f0f0" />
                  <span>Cylinder</span>
                  <Spacer />
                  <Icon name="pin" size={13} color="#909090" />
                </PropTitle>
                <Drop value="Add Modifier" label="Add Modifier" $bg="#272727" />
              </PropContent>
            </PropBody>
          </Properties>
        </RightColumn>
      </Main>

      <StatusBar>
        <Hint>
          <Icon name="mouseLeft" />
          Select
        </Hint>
        <Hint>
          <Icon name="mouseMiddle" />
          Rotate View
        </Hint>
        <Hint>
          <Icon name="mouseRight" />
          Call Menu
        </Hint>
        <Spacer />
        3.6.0
      </StatusBar>
    </Screen>
  );
}
